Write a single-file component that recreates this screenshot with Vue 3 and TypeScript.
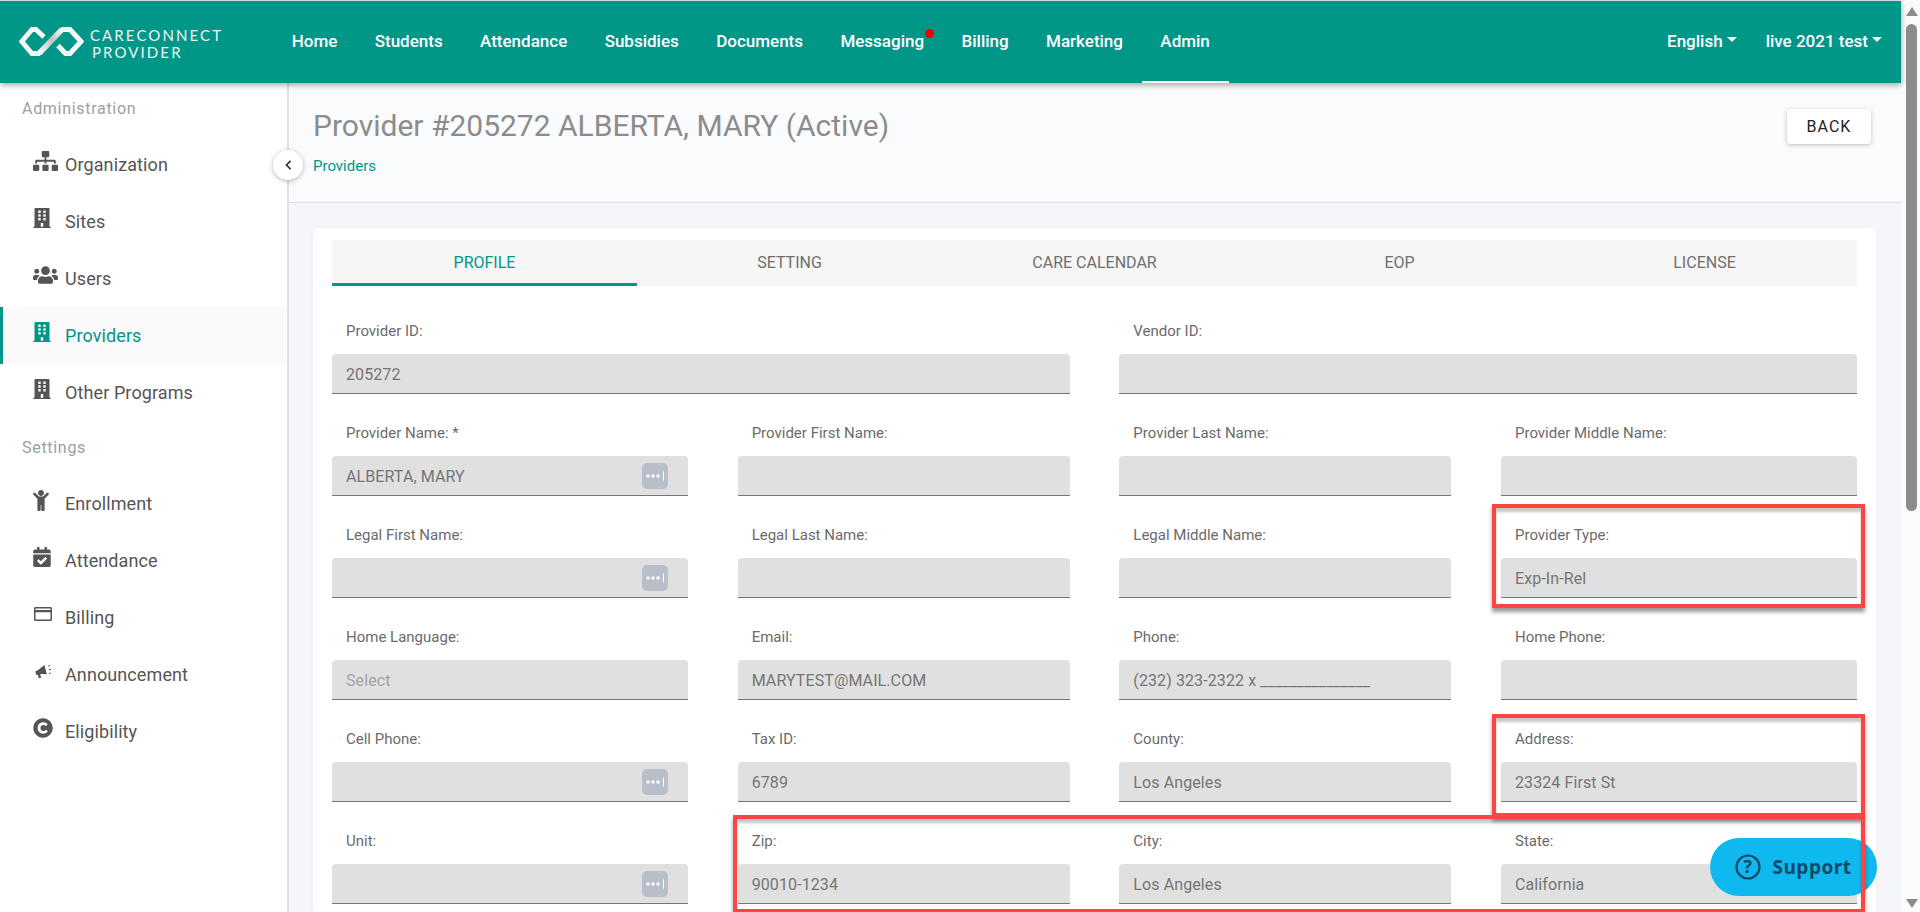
<script setup lang="ts">
type Field = {
  label: string;
  value?: string;
  picker?: boolean;
  placeholder?: boolean;
  wide?: boolean;
};

const topNav = [
  "Home",
  "Students",
  "Attendance",
  "Subsidies",
  "Documents",
  "Messaging",
  "Billing",
  "Marketing",
  "Admin",
];

const icons = {
  sitemap: {
    box: "0 0 640 512",
    d: "M128 352H32c-17.67 0-32 14.33-32 32v96c0 17.67 14.33 32 32 32h96c17.67 0 32-14.33 32-32v-96c0-17.67-14.33-32-32-32zm-24-80h192v48h48v-48h192v48h48v-57.59c0-21.17-17.23-38.41-38.41-38.41H344v-64h40c17.67 0 32-14.33 32-32V32c0-17.67-14.33-32-32-32H256c-17.67 0-32 14.33-32 32v96c0 17.67 14.33 32 32 32h40v64H94.41C73.23 224 56 241.23 56 262.41V320h48v-48zm264 80h-96c-17.67 0-32 14.33-32 32v96c0 17.67 14.33 32 32 32h96c17.67 0 32-14.33 32-32v-96c0-17.67-14.33-32-32-32zm240 0h-96c-17.67 0-32 14.33-32 32v96c0 17.67 14.33 32 32 32h96c17.67 0 32-14.33 32-32v-96c0-17.67-14.33-32-32-32z",
  },
  building: {
    box: "0 0 448 512",
    d: "M436 480h-20V24c0-13.255-10.745-24-24-24H56C42.745 0 32 10.745 32 24v456H12c-6.627 0-12 5.373-12 12v20h448v-20c0-6.627-5.373-12-12-12zM128 76c0-6.627 5.373-12 12-12h40c6.627 0 12 5.373 12 12v40c0 6.627-5.373 12-12 12h-40c-6.627 0-12-5.373-12-12V76zm0 96c0-6.627 5.373-12 12-12h40c6.627 0 12 5.373 12 12v40c0 6.627-5.373 12-12 12h-40c-6.627 0-12-5.373-12-12v-40zm52 148h-40c-6.627 0-12-5.373-12-12v-40c0-6.627 5.373-12 12-12h40c6.627 0 12 5.373 12 12v40c0 6.627-5.373 12-12 12zm76 160h-64v-84c0-6.627 5.373-12 12-12h40c6.627 0 12 5.373 12 12v84zm64-172c0 6.627-5.373 12-12 12h-40c-6.627 0-12-5.373-12-12v-40c0-6.627 5.373-12 12-12h40c6.627 0 12 5.373 12 12v40zm0-96c0 6.627-5.373 12-12 12h-40c-6.627 0-12-5.373-12-12v-40c0-6.627 5.373-12 12-12h40c6.627 0 12 5.373 12 12v40zm0-96c0 6.627-5.373 12-12 12h-40c-6.627 0-12-5.373-12-12V76c0-6.627 5.373-12 12-12h40c6.627 0 12 5.373 12 12v40z",
  },
  users: {
    box: "0 0 640 512",
    d: "M96 224c35.3 0 64-28.7 64-64s-28.7-64-64-64-64 28.7-64 64 28.7 64 64 64zm448 0c35.3 0 64-28.7 64-64s-28.7-64-64-64-64 28.7-64 64 28.7 64 64 64zm32 32h-64c-17.6 0-33.5 7.1-45.1 18.6 40.3 22.1 68.9 62 75.1 109.4h66c17.7 0 32-14.3 32-32v-32c0-35.3-28.7-64-64-64zm-256 0c61.9 0 112-50.1 112-112S381.9 32 320 32 208 82.1 208 144s50.1 112 112 112zm76.8 32h-8.3c-20.8 10-43.9 16-68.5 16s-47.6-6-68.5-16h-8.3C179.6 288 128 339.6 128 403.2V432c0 26.5 21.5 48 48 48h288c26.5 0 48-21.5 48-48v-28.8c0-63.6-51.6-115.2-115.2-115.2zm-223.7-13.4C161.5 263.1 145.6 256 128 256H64c-35.3 0-64 28.7-64 64v32c0 17.7 14.3 32 32 32h65.9c6.3-47.4 34.9-87.3 75.2-109.4z",
  },
  child: {
    box: "0 0 384 512",
    d: "M120 72c0-39.765 32.235-72 72-72s72 32.235 72 72c0 39.764-32.235 72-72 72s-72-32.236-72-72zm254.627 1.373c-12.496-12.497-32.758-12.497-45.254 0L242.745 160H141.254L54.627 73.373c-12.496-12.497-32.758-12.497-45.254 0-12.497 12.497-12.497 32.758 0 45.255L104 213.254V480c0 17.673 14.327 32 32 32h16c17.673 0 32-14.327 32-32V368h16v112c0 17.673 14.327 32 32 32h16c17.673 0 32-14.327 32-32V213.254l94.627-94.627c12.497-12.497 12.497-32.757 0-45.254z",
  },
  calendar: {
    box: "0 0 448 512",
    d: "M436 160H12c-6.6 0-12-5.4-12-12v-36c0-26.5 21.5-48 48-48h48V12c0-6.6 5.4-12 12-12h40c6.6 0 12 5.4 12 12v52h128V12c0-6.6 5.4-12 12-12h40c6.6 0 12 5.4 12 12v52h48c26.5 0 48 21.5 48 48v36c0 6.6-5.4 12-12 12zM12 192h424c6.6 0 12 5.4 12 12v260c0 26.5-21.5 48-48 48H48c-26.5 0-48-21.5-48-48V204c0-6.6 5.4-12 12-12zm333.3 95.9l-28.2-28.4c-4.7-4.7-12.3-4.7-17-.1L194.7 364l-45.9-46.3c-4.7-4.7-12.3-4.7-17-.1l-28.4 28.2c-4.7 4.7-4.7 12.3-.1 17l82.6 83.3c4.7 4.7 12.3 4.7 17 .1l142-140.9c4.7-4.6 4.7-12.2 0-17z",
  },
  card: {
    box: "0 0 576 512",
    d: "M527.9 32H48.1C21.5 32 0 53.5 0 80v352c0 26.5 21.5 48 48.1 48h479.8c26.6 0 48.1-21.5 48.1-48V80c0-26.5-21.5-48-48.1-48zM54.1 80h467.8c3.3 0 6 2.7 6 6v42H48.1V86c0-3.3 2.7-6 6-6zm467.8 352H54.1c-3.3 0-6-2.7-6-6V196h479.8v230c0 3.3-2.7 6-6 6z",
  },
  bullhorn: {
    box: "0 0 20 17",
    d: "M0 8.5 3 7.2 10.5 1.2 13.2 11.6 5.6 11.4 6.8 15.6 4 16.2 2.9 12.2 1.3 12.6ZM14.6 2.2l1.6-1.3.7.9-1.6 1.3ZM15.4 6l2.6-.7.3 1.1-2.6.7ZM15.8 9.6l2 .9-.5 1-2-.9Z",
  },
  copyright: {
    box: "0 0 512 512",
    d: "M256 8C119.033 8 8 119.033 8 256s111.033 248 248 248 248-111.033 248-248S392.967 8 256 8zm117.134 346.753c-1.592 1.867-39.776 45.731-109.851 45.731-84.692 0-144.484-63.26-144.484-145.567 0-81.303 62.004-143.401 143.762-143.401 66.957 0 101.965 37.315 103.422 38.904a12 12 0 0 1 1.238 14.623l-22.383 34.655c-4.049 6.267-12.774 7.351-18.234 2.295-.233-.214-26.529-23.88-61.88-23.88-46.116 0-73.916 33.575-73.916 76.082 0 39.602 25.514 79.692 74.277 79.692 38.697 0 65.28-28.338 65.544-28.625 5.132-5.565 14.059-5.033 18.512 1.053l24.547 33.572a12.001 12.001 0 0 1-.554 14.866z",
  },
};

const adminItems = [
  { label: "Organization", icon: icons.sitemap, cls: "i-sitemap" },
  { label: "Sites", icon: icons.building, cls: "i-building" },
  { label: "Users", icon: icons.users, cls: "i-users" },
  { label: "Providers", icon: icons.building, cls: "i-building", active: true },
  { label: "Other Programs", icon: icons.building, cls: "i-building" },
];

const settingItems = [
  { label: "Enrollment", icon: icons.child, cls: "i-child" },
  { label: "Attendance", icon: icons.calendar, cls: "i-building" },
  { label: "Billing", icon: icons.card, cls: "i-card" },
  { label: "Announcement", icon: icons.bullhorn, cls: "i-horn" },
  { label: "Eligibility", icon: icons.copyright, cls: "i-copy" },
];

const tabs = ["Profile", "Setting", "Care Calendar", "EOP", "License"];

const fields: Field[] = [
  { label: "Provider ID:", value: "205272", wide: true },
  { label: "Vendor ID:", wide: true },
  { label: "Provider Name: *", value: "ALBERTA, MARY", picker: true },
  { label: "Provider First Name:" },
  { label: "Provider Last Name:" },
  { label: "Provider Middle Name:" },
  { label: "Legal First Name:", picker: true },
  { label: "Legal Last Name:" },
  { label: "Legal Middle Name:" },
  { label: "Provider Type:", value: "Exp-In-Rel" },
  { label: "Home Language:", value: "Select", placeholder: true },
  { label: "Email:", value: "MARYTEST@MAIL.COM" },
  { label: "Phone:", value: "(232) 323-2322 x _______________" },
  { label: "Home Phone:" },
  { label: "Cell Phone:", picker: true },
  { label: "Tax ID:", value: "6789" },
  { label: "County:", value: "Los Angeles" },
  { label: "Address:", value: "23324 First St" },
  { label: "Unit:", picker: true },
  { label: "Zip:", value: "90010-1234" },
  { label: "City:", value: "Los Angeles" },
  { label: "State:", value: "California" },
];
</script>

<template>
  <div class="app">
    <div class="page">
      <header class="topbar">
        <div class="logo">
          <svg class="logo-mark" viewBox="0 0 65 29" width="65" height="29">
            <defs>
              <linearGradient id="logo-link" x1="0" y1="1" x2="1" y2="0">
                <stop offset="0" stop-color="#ffffff" />
                <stop offset="0.55" stop-color="#b9c4c1" />
                <stop offset="1" stop-color="#f2f5f4" />
              </linearGradient>
            </defs>
            <path d="M25 10 17 2.5H13L2.8 14.5 13 26.500H21" fill="none" stroke="#f4f7f6" stroke-width="5" />
            <path d="M20 26.500 43 2.500" fill="none" stroke="url(#logo-link)" stroke-width="5.500" />
            <path d="M42 2.500H51L62 14.500 51 26.500H46.500L39 18.500" fill="none" stroke="#f4f7f6" stroke-width="5" />
          </svg>
          <div class="logo-text">
            <span>CARECONNECT</span>
            <span class="logo-sub">PROVIDER</span>
          </div>
        </div>
        <nav class="topnav">
          <a
            v-for="item in topNav"
            :key="item"
            class="topnav-item"
            :class="{ current: item === 'Admin' }"
          >
            {{ item }}
            <i v-if="item === 'Messaging'" class="dot"></i>
          </a>
        </nav>
        <div class="top-right">
          <a class="drop">English</a>
          <a class="drop">live 2021 test</a>
        </div>
      </header>

      <div class="body">
        <aside class="sidebar">
          <button class="collapse" type="button" aria-label="Collapse">
            <svg viewBox="0 0 8 12" width="7" height="10">
              <path d="M6.500 1 1.500 6l5 5" fill="none" stroke="#333" stroke-width="2" />
            </svg>
          </button>
          <p class="section first">Administration</p>
          <a
            v-for="item in adminItems"
            :key="item.label"
            class="side-item"
            :class="{ active: item.active }"
          >
            <span class="side-icon">
              <svg :class="item.cls" :viewBox="item.icon.box"><path :d="item.icon.d" /></svg>
            </span>
            {{ item.label }}
          </a>
          <p class="section">Settings</p>
          <a v-for="item in settingItems" :key="item.label" class="side-item">
            <span class="side-icon">
              <svg :class="item.cls" :viewBox="item.icon.box"><path :d="item.icon.d" /></svg>
            </span>
            {{ item.label }}
          </a>
        </aside>

        <main class="main">
          <div class="page-head">
            <div>
              <h1 class="title">Provider #205272 ALBERTA, MARY (Active)</h1>
              <a class="crumb">Providers</a>
            </div>
            <button class="back" type="button">BACK</button>
          </div>

          <div class="content">
            <section class="card">
              <div class="tabs">
                <div
                  v-for="(tab, i) in tabs"
                  :key="tab"
                  class="tab"
                  :class="{ selected: i === 0 }"
                >
                  {{ tab }}
                </div>
              </div>
              <div class="form">
                <div
                  v-for="field in fields"
                  :key="field.label"
                  class="form-item"
                  :class="{ wide: field.wide }"
                >
                  <label class="form-label">{{ field.label }}</label>
                  <div class="input" :class="{ muted: field.placeholder }">
                    <span class="input-value">{{ field.value }}</span>
                    <span v-if="field.picker" class="picker">
                      <svg viewBox="0 0 26 26" width="26" height="26">
                        <circle cx="6" cy="13" r="1.700" fill="#fff" />
                        <circle cx="11" cy="13" r="1.700" fill="#fff" />
                        <circle cx="16" cy="13" r="1.700" fill="#fff" />
                        <path d="M21.500 8.500v9" stroke="#fff" stroke-width="1" />
                      </svg>
                    </span>
                  </div>
                </div>
              </div>
            </section>
          </div>
        </main>
      </div>
    </div>

    <div class="scrollbar">
      <i class="arrow up"></i>
      <i class="thumb"></i>
      <i class="arrow down"></i>
    </div>

    <a class="support">
      <svg viewBox="0 0 26 26" width="26" height="26">
        <circle cx="13" cy="13" r="11.500" fill="none" stroke="#0d4a68" stroke-width="2.200" />
        <text x="13" y="19" text-anchor="middle" class="support-q">?</text>
      </svg>
      Support
    </a>

    <div class="mark mark-type"></div>
    <div class="mark mark-address"></div>
    <div class="mark mark-location"></div>
  </div>
</template>

<style>
html,
body {
  margin: 0;
  overflow: hidden;
}
</style>

<style scoped>
.app {
  position: relative;
  display: flex;
  width: 1920px;
  height: 912px;
  overflow: hidden;
  background: #fff;
  font-family: Roboto, "Liberation Sans", sans-serif;
  color: #555;
}

.page {
  display: flex;
  flex-direction: column;
  width: 1901px;
  height: 912px;
  flex: none;
  padding-top: 1px;
  box-sizing: border-box;
  background: #e4eaea;
}

.topbar {
  position: relative;
  z-index: 3;
  display: flex;
  align-items: center;
  height: 82px;
  flex: none;
  box-sizing: border-box;
  padding-bottom: 1px;
  background: #009688;
  color: #fff;
  box-shadow: 0 2px 6px rgba(0, 0, 0, 0.35);
}

.logo {
  display: flex;
  align-items: center;
  width: 273px;
  padding-left: 19px;
  box-sizing: border-box;
}

.logo-mark {
  flex: none;
  margin-right: 6px;
}

.logo-text {
  display: flex;
  flex-direction: column;
  margin-top: 4px;
  font-family: Lato, sans-serif;
  font-size: 15px;
  line-height: 17px;
  letter-spacing: 2.1px;
  color: #eef5f3;
}

.logo-sub {
  margin-left: 2px;
}

.topnav {
  display: flex;
  height: calc(100% + 1px);
}

.topnav-item {
  position: relative;
  display: flex;
  align-items: center;
  padding: 0 18.700px 1px;
  font-size: 17px;
  font-weight: 500;
}

.topnav-item.current {
  box-shadow: inset 0 -2px 0 #fff;
}

.dot {
  position: absolute;
  top: 28px;
  right: 9px;
  width: 9px;
  height: 9px;
  border-radius: 50%;
  background: #f50000;
}

.top-right {
  display: flex;
  gap: 29px;
  margin-left: auto;
  padding: 0 19px 1px 0;
  font-size: 17px;
  font-weight: 500;
}

.drop {
  display: flex;
  align-items: center;
}

.drop::after {
  content: "";
  margin-left: 4px;
  margin-bottom: 4px;
  border-top: 5px solid #fff;
  border-left: 5px solid transparent;
  border-right: 5px solid transparent;
}

.body {
  display: flex;
  flex: 1;
  min-height: 0;
}

.sidebar {
  position: relative;
  z-index: 2;
  width: 289px;
  flex: none;
  box-sizing: border-box;
  border-right: 2px solid #e1e1e3;
  background: #fff;
}

.collapse {
  position: absolute;
  top: 67px;
  right: -16px;
  display: flex;
  align-items: center;
  justify-content: center;
  width: 30px;
  height: 30px;
  padding: 0;
  border: none;
  border-radius: 50%;
  background: #fff;
  box-shadow: 0 1px 5px rgba(0, 0, 0, 0.3);
}

.section {
  margin: 17px 0 17px 22px;
  font-size: 16px;
  line-height: 20px;
  letter-spacing: 0.7px;
  color: #9aa0a6;
}

.section.first {
  margin-top: 16px;
}

.side-item {
  display: flex;
  align-items: center;
  height: 57px;
  box-sizing: border-box;
  padding-left: 30px;
  padding-bottom: 1px;
  border-left: 3px solid transparent;
  font-size: 18px;
  letter-spacing: 0.1px;
  color: #555;
}

.side-item.active {
  border-left-color: #009688;
  background: #fafafa;
  color: #009688;
}

.side-icon {
  display: flex;
  align-items: center;
  width: 32px;
  flex: none;
  margin-bottom: 6px;
}

.side-icon svg {
  display: block;
  fill: currentColor;
}

.i-sitemap,
.i-users {
  width: 25px;
  height: 20px;
}

.i-building {
  width: 18px;
  height: 20px;
}

.i-child {
  width: 16px;
  height: 21px;
}

.i-card {
  width: 20px;
  height: 16px;
}

.i-horn {
  width: 18px;
  height: 15px;
  margin-left: 2px;
}

.i-copy {
  width: 20px;
  height: 20px;
}

.main {
  display: flex;
  flex-direction: column;
  flex: 1;
  min-width: 0;
  background: #f5f6fa;
}

.page-head {
  display: flex;
  justify-content: space-between;
  align-items: flex-start;
  height: 120px;
  flex: none;
  box-sizing: border-box;
  padding: 25px 30px 0 24px;
  border-bottom: 1px solid #d5dfe9;
  background: #fafbfd;
}

.title {
  margin: 0 0 12px;
  font-size: 30px;
  font-weight: 400;
  line-height: 36px;
  color: #8c8c8c;
}

.crumb {
  display: block;
  font-size: 15px;
  line-height: 20px;
  color: #009688;
}

.back {
  width: 84px;
  height: 35px;
  margin-top: 1px;
  border: none;
  border-radius: 4px;
  background: #fff;
  box-shadow: 0 1px 4px rgba(0, 0, 0, 0.25);
  font-family: inherit;
  font-size: 16px;
  letter-spacing: 1px;
  color: #222;
}

.content {
  flex: 1;
  min-height: 0;
  padding: 25px 25px 0 24px;
}

.card {
  height: 100%;
  padding: 12px 19px 0;
  box-sizing: border-box;
  border-radius: 6px 6px 0 0;
  background: #fff;
  box-shadow: 0 0 4px rgba(0, 0, 0, 0.04);
}

.tabs {
  display: grid;
  grid-template-columns: repeat(5, 1fr);
  height: 46px;
  background: #f6f6f6;
}

.tab {
  display: flex;
  align-items: center;
  justify-content: center;
  padding-bottom: 1px;
  font-size: 16px;
  text-transform: uppercase;
  color: #6f6f6f;
}

.tab.selected {
  box-shadow: inset 0 -3px 0 #009688;
  color: #009688;
}

.form {
  display: grid;
  grid-template-columns: 356fr 332fr 332fr 356fr;
  column-gap: 49.670px;
  margin-top: 35px;
}

.form-item.wide {
  grid-column: span 2;
}

.form-label {
  display: block;
  height: 20px;
  margin: 0 0 13px 14px;
  font-size: 15px;
  line-height: 20px;
  color: #6b6b6b;
}

.input {
  display: flex;
  justify-content: space-between;
  align-items: center;
  height: 40px;
  margin-bottom: 29px;
  padding: 0 20px 0 14px;
  box-sizing: border-box;
  border-bottom: 1px solid #757575;
  border-radius: 4px 4px 0 0;
  background: #e0e0e0;
  font-size: 16px;
  letter-spacing: 0.1px;
  color: #757575;
}

.input-value {
  padding-top: 2px;
}

.input.muted {
  color: #a3a3a3;
}

.picker {
  display: block;
  width: 26px;
  height: 26px;
  border-radius: 5px;
  background: #b9bfca;
}

.picker svg {
  display: block;
}

.scrollbar {
  display: flex;
  flex-direction: column;
  align-items: center;
  flex: 1;
  padding: 7px 0 4px 2px;
  box-sizing: border-box;
  background: #fbfbfd;
}

.arrow {
  width: 0;
  height: 0;
  border-left: 6px solid transparent;
  border-right: 6px solid transparent;
}

.arrow.up {
  border-bottom: 9px solid #8c8c8c;
}

.arrow.down {
  margin-top: auto;
  border-top: 9px solid #8c8c8c;
}

.thumb {
  width: 11px;
  height: 487px;
  margin-top: 8px;
  border-radius: 6px;
  background: #8c8c8c;
}

.support {
  position: absolute;
  top: 838px;
  left: 1710px;
  z-index: 4;
  display: flex;
  align-items: center;
  justify-content: center;
  gap: 11px;
  width: 167px;
  height: 58px;
  border-radius: 29px;
  background: #0fb8ef;
  font-family: "Open Sans", sans-serif;
  font-size: 19px;
  font-weight: 700;
  letter-spacing: 0.5px;
  color: #0d4a68;
}

.support-q {
  font-family: "Open Sans", sans-serif;
  font-size: 18px;
  font-weight: 700;
  fill: #0d4a68;
}

.mark {
  position: absolute;
  z-index: 5;
  box-sizing: border-box;
  border: 4px solid #ff4444;
  box-shadow:
    0 4px 4px rgba(0, 0, 0, 0.4),
    inset 0 4px 3px rgba(0, 0, 0, 0.22);
}

.mark-type {
  top: 504px;
  left: 1492px;
  width: 373px;
  height: 104px;
}

.mark-address {
  top: 714px;
  left: 1492px;
  width: 373px;
  height: 103px;
}

.mark-location {
  top: 815px;
  left: 733px;
  width: 1132px;
  height: 98px;
}
</style>
